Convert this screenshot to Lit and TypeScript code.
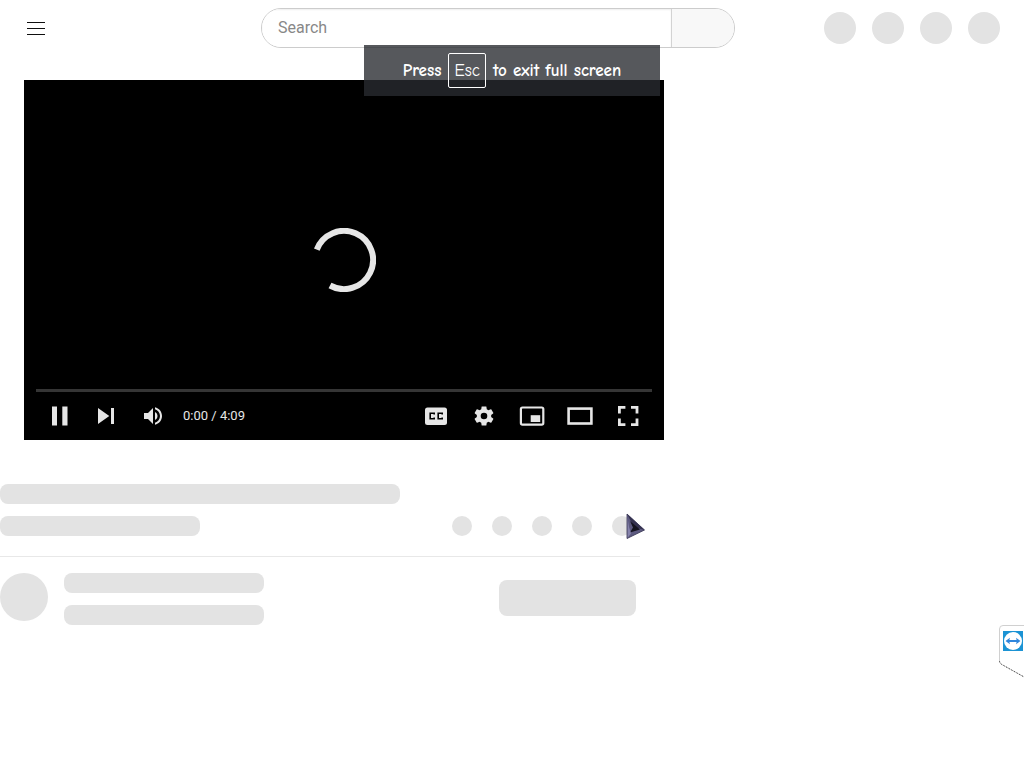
import { LitElement, html, css, svg } from "lit";
import { customElement } from "lit/decorators.js";

const icons = {
  menu: svg`<path d="M3 6.5h18M3 12.5h18M3 18.5h18" fill="none" stroke="#0f0f0f" stroke-width="1"/>`,
  pause: svg`<path d="M16 14.5h5v19h-5zM26.3 14.5h5.2v19h-5.2z"/>`,
  next: svg`<path d="M16 16v16l11.3-8zM29 16h3v16h-3z"/>`,
  volume: svg`<path transform="translate(8 6)" d="M8 21h4l5 5V10l-5 5H8zM19 14v8c1.48-.68 2.5-2.23 2.5-4s-1.02-3.26-2.5-4zM19 11.29c2.89.86 5 3.54 5 6.71s-2.11 5.85-5 6.71v2.06c4.01-.91 7-4.49 7-8.77s-2.99-7.86-7-8.77z"/>`,
  captions: svg`<rect x="13" y="15.5" width="22" height="17.5" rx="2.5"/>
    <path d="M22.2 22.600v-1.400h-4v5.600h4v-1.400M30.200 22.600v-1.400h-4v5.600h4v-1.400" fill="none" stroke="#000" stroke-width="1.6"/>`,
  settings: svg`<path transform="translate(12 12)" d="M19.14 12.94c.04-.3.06-.61.06-.94 0-.32-.02-.64-.07-.94l2.03-1.58c.18-.14.23-.41.12-.61l-1.92-3.32c-.12-.22-.37-.29-.59-.22l-2.39.96c-.5-.38-1.03-.7-1.62-.94l-.36-2.54c-.04-.24-.24-.41-.48-.41h-3.84c-.24 0-.43.17-.47.41l-.36 2.54c-.59.24-1.13.57-1.62.94l-2.39-.96c-.22-.08-.47 0-.59.22L2.74 8.87c-.12.21-.08.47.12.61l2.03 1.58c-.05.3-.09.63-.09.94s.02.64.07.94l-2.03 1.58c-.18.14-.23.41-.12.61l1.92 3.32c.12.22.37.29.59.22l2.39-.96c.5.38 1.03.7 1.62.94l.36 2.54c.05.24.24.41.48.41h3.84c.24 0 .44-.17.47-.41l.36-2.54c.59-.24 1.13-.56 1.62-.94l2.39.96c.22.08.47 0 .59-.22l1.92-3.32c.12-.22.07-.47-.12-.61zM12 15.3a3.3 3.3 0 1 1 0-6.6 3.3 3.3 0 0 1 0 6.6z"/>`,
  mini: svg`<rect x="12.9" y="15.5" width="22.4" height="17.2" rx="1.6" fill="none" stroke="#e6e6e6" stroke-width="2.2"/><path d="M22.7 23.2h9.5v6.8h-9.5z"/>`,
  theater: svg`<rect x="12.6" y="16.6" width="22.8" height="14.9" fill="none" stroke="#e6e6e6" stroke-width="2.6"/>`,
  full: svg`<path d="M15.4 21.4v-6H21.4M27 15.4h6v6M33 26.6v6h-6M21.4 32.6h-6v-6" fill="none" stroke="#e6e6e6" stroke-width="2.8"/>`,
};

@customElement("skeleton-shape")
class SkeletonShape extends LitElement {
  static styles = css`
    :host {
      display: block;
      flex: none;
      background: #e3e3e3;
    }
  `;
  render() {
    return html``;
  }
}

@customElement("video-player")
class VideoPlayer extends LitElement {
  static styles = css`
    :host {
      display: flex;
      flex-direction: column;
      aspect-ratio: 16 / 9;
      background: #000;
      color: #e6e6e6;
      font: 13px/48px Roboto, "Liberation Sans", sans-serif;
    }
    .stage {
      flex: 1;
      display: grid;
      place-items: center;
      padding-top: 51px;
    }
    .stage svg {
      display: block;
    }
    .track {
      height: 3px;
      margin: 0 12px;
      background: #353535;
    }
    .controls {
      display: flex;
      justify-content: space-between;
      padding: 0 12px;
      height: 48px;
    }
    .group {
      display: flex;
    }
    button {
      display: block;
      width: 48px;
      height: 48px;
      padding: 0;
      border: 0;
      background: none;
      color: inherit;
    }
    .left button {
      width: 46px;
    }
    button svg {
      display: block;
      width: 48px;
      height: 48px;
      fill: #e6e6e6;
    }
    .time {
      padding-left: 9px;
      white-space: nowrap;
    }
  `;
  private control(label: string, icon: unknown) {
    return html`<button type="button" aria-label=${label}>
      <svg viewBox="0 0 48 48" aria-hidden="true">${icon}</svg>
    </button>`;
  }
  render() {
    return html`
      <div class="stage">
        <svg width="64" height="64" viewBox="-32 -32 64 64" role="img" aria-label="Loading">
          <path d="M-27.2-10.4A29.1 29.1 0 1 1-14 25.5" fill="none" stroke="#e6e6e6" stroke-width="6" />
        </svg>
      </div>
      <div class="track"></div>
      <div class="controls">
        <div class="group left">
          ${this.control("Pause", icons.pause)}
          ${this.control("Next", icons.next)}
          ${this.control("Mute", icons.volume)}
          <span class="time">0:00 / 4:09</span>
        </div>
        <div class="group">
          ${this.control("Subtitles", icons.captions)}
          ${this.control("Settings", icons.settings)}
          ${this.control("Miniplayer", icons.mini)}
          ${this.control("Theater mode", icons.theater)}
          ${this.control("Full screen", icons.full)}
        </div>
      </div>
    `;
  }
}

@customElement("app-root")
class AppRoot extends LitElement {
  static styles = css`
    :host {
      display: block;
      position: relative;
      min-height: 100vh;
      background: #fff;
      font-family: Roboto, "Liberation Sans", sans-serif;
    }
    * {
      box-sizing: border-box;
    }
    header {
      display: grid;
      grid-template-columns: 237px minmax(0, 474px) 1fr;
      align-items: center;
      height: 56px;
      padding: 0 24px;
    }
    .menu {
      width: 24px;
      height: 24px;
      padding: 0;
      border: 0;
      background: none;
    }
    .menu svg {
      display: block;
    }
    .search {
      display: flex;
      height: 40px;
      border: 1px solid #ccc;
      border-radius: 20px;
      overflow: hidden;
    }
    .search input {
      flex: 1;
      min-width: 0;
      padding: 0 16px;
      border: 0;
      outline: 0;
      background: #fff;
      font: 16px/24px Roboto, "Liberation Sans", sans-serif;
      box-shadow: inset 0 1px 2px #eee;
    }
    .search input::placeholder {
      color: #888;
      opacity: 1;
    }
    .search button {
      width: 63px;
      padding: 0;
      border: 0;
      border-left: 1px solid #d3d3d3;
      background: #f8f8f8;
    }
    .masthead-end {
      display: flex;
      justify-content: flex-end;
      gap: 16px;
    }
    .round {
      width: 32px;
      height: 32px;
      border-radius: 50%;
    }
    video-player {
      width: 62.5%;
      margin: 24px 0 0 24px;
    }
    .meta {
      width: 62.5%;
      padding-top: 44px;
    }
    .bar {
      height: 20px;
      width: 200px;
      border-radius: 8px;
    }
    .title {
      width: 400px;
      margin-bottom: 12px;
    }
    .row {
      display: flex;
      justify-content: space-between;
      padding-right: 8px;
      padding-bottom: 20px;
      border-bottom: 1px solid #e8e8e8;
    }
    .actions {
      display: flex;
      gap: 20px;
    }
    .dot {
      width: 20px;
      height: 20px;
      border-radius: 50%;
    }
    .owner {
      display: flex;
      align-items: flex-start;
      gap: 16px;
      padding: 16px 4px 0 0;
    }
    .avatar {
      width: 48px;
      height: 48px;
      border-radius: 50%;
    }
    .names {
      flex: 1;
      display: grid;
      gap: 12px;
    }
    .subscribe {
      width: 137px;
      height: 36px;
      margin-top: 7px;
      border-radius: 8px;
    }
    .toast {
      position: absolute;
      top: 45px;
      left: 50%;
      margin-left: -148px;
      width: 296px;
      height: 51px;
      display: flex;
      justify-content: center;
      align-items: center;
      gap: 7px;
      background: rgba(40, 43, 48, 0.79);
      color: #fff;
      font: bold 17px/24px "Comic Neue", "Comic Sans MS", Lato, sans-serif;
      white-space: nowrap;
    }
    kbd {
      height: 35px;
      padding: 0 5px;
      border: 1px solid #fff;
      border-radius: 2px;
      font: inherit;
      font-weight: normal;
      line-height: 34px;
    }
    .dock {
      position: absolute;
      top: 625px;
      right: 0;
    }
    .cursor {
      position: absolute;
      top: 513px;
      left: 626px;
    }
  `;
  render() {
    return html`
      <header>
        <button class="menu" type="button" aria-label="Menu">
          <svg width="24" height="24" viewBox="0 0 24 24">${icons.menu}</svg>
        </button>
        <form class="search" role="search">
          <input type="text" placeholder="Search" aria-label="Search" />
          <button type="button" aria-label="Submit search"></button>
        </form>
        <div class="masthead-end">
          ${[0, 1, 2, 3].map(() => html`<skeleton-shape class="round"></skeleton-shape>`)}
        </div>
      </header>
      <main>
        <video-player></video-player>
        <section class="meta">
          <skeleton-shape class="bar title"></skeleton-shape>
          <div class="row">
            <skeleton-shape class="bar"></skeleton-shape>
            <div class="actions">
              ${[0, 1, 2, 3, 4].map(() => html`<skeleton-shape class="dot"></skeleton-shape>`)}
            </div>
          </div>
          <div class="owner">
            <skeleton-shape class="avatar"></skeleton-shape>
            <div class="names">
              <skeleton-shape class="bar"></skeleton-shape>
              <skeleton-shape class="bar"></skeleton-shape>
            </div>
            <skeleton-shape class="subscribe"></skeleton-shape>
          </div>
        </section>
      </main>
      <div class="toast" role="status"><span>Press</span><kbd>Esc</kbd><span>to exit full screen</span></div>
      <svg class="dock" width="25" height="53" viewBox="0 0 25 53" aria-hidden="true">
        <path d="M26 .5H4Q.5.5.5 4v32q0 2 2 3.3L26 52.5" fill="#fff" stroke="#d0d0d0" />
        <path d="M.5 36q0 2 2 3.3L26 52.5" fill="none" stroke="#555" stroke-dasharray="1.5 1.5" />
        <rect x="4" y="6" width="20" height="20" fill="#1b93d4" />
        <circle cx="14" cy="16" r="9" fill="#fff" />
        <path d="M6.500 16l4.500-3.200-.6 2.300h7.200l-.6-2.300 4.500 3.200-4.500 3.200.6-2.300h-7.200l.6 2.300z" fill="#2f86dc" />
      </svg>
      <svg class="cursor" width="20" height="27" viewBox="0 0 20 27" aria-hidden="true">
        <path d="M1 1l17.5 16L1 25.5z" fill="#5d5a80" />
        <path d="M1 1l17.5 16L8 14z" fill="#34314f" />
        <path d="M4 8L14 16.5 4 19.500l3-5z" fill="#14131f" />
        <path d="M1 1v24.500l4-5L3 14z" fill="#8582ab" />
        <path d="M1 1l17.500 16L1 25.500z" fill="none" stroke="#34314f" stroke-width=".8" />
      </svg>
    `;
  }
}
